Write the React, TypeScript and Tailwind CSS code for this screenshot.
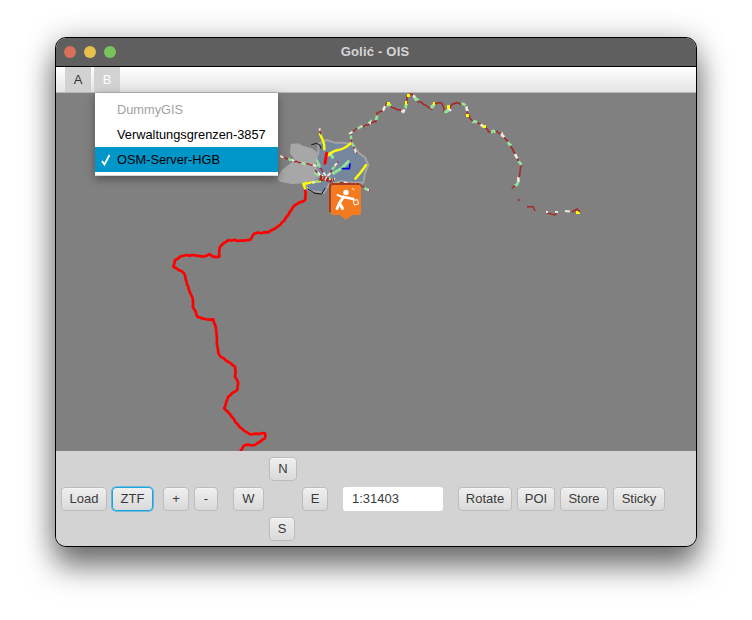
import React from "react";

const font = { fontFamily: '"Liberation Sans", Arial, sans-serif' };

type P = [number, number];

// Roughens a traced polyline so a route looks like recorded GPS data.
function rough(points: P[], step: number, amp: number, seed: number): string {
  let out = `M${points[0][0]} ${points[0][1]}`;
  let k = seed;
  for (let i = 1; i < points.length; i++) {
    const [x0, y0] = points[i - 1];
    const [x1, y1] = points[i];
    const len = Math.hypot(x1 - x0, y1 - y0);
    const n = Math.max(1, Math.round(len / step));
    for (let j = 1; j <= n; j++) {
      k += 1;
      const t = j / n;
      const a = j === n ? 0 : Math.sin(k * 12.9898) * amp;
      const b = j === n ? 0 : Math.sin(k * 78.233) * amp;
      out += ` L${(x0 + (x1 - x0) * t + a).toFixed(1)} ${(y0 + (y1 - y0) * t + b).toFixed(1)}`;
    }
  }
  return out;
}

function Btn({ label, w, focus }: { label: string; w: string; focus?: boolean }) {
  return (
    <div
      className={`${w} h-[24px] flex items-center justify-center rounded-[4px] border bg-gradient-to-b from-[#efefef] to-[#dadada] text-[13px] text-[#3a3a3a] ${
        focus ? "border-[#1aa5e0] shadow-[0_0_0_0.6px_#1aa5e0]" : "border-[#bcbcbc] shadow-[inset_0_1px_0_#f6f6f6]"
      }`}
    >
      {label}
    </div>
  );
}

const redPts: P[] = [
  [305, 190], [305, 200], [295, 205], [288.3, 215], [280, 225], [268.3, 232.3], [255, 233.3], [250, 240],
  [240, 240.7], [228.3, 240], [220, 246.7], [219.3, 256.7], [213.3, 256.7], [209.3, 254], [203.3, 256.7],
  [193.3, 255], [183.3, 255.7], [175, 260], [173.3, 266.7], [184, 273.3], [188.3, 286.7], [192.7, 298.3],
  [192.7, 306.7], [197.3, 316.7], [206.7, 319.3], [213.3, 319.3], [215.7, 326.7], [216.7, 343.3], [219.3, 355],
  [235, 366.7], [235, 376.7], [238.3, 383.3], [237.3, 390], [228.3, 396.7], [224, 408.3], [231.7, 416.7],
  [240, 427.3], [250, 434.3], [265, 433.3], [265, 438.3], [255, 445], [245, 445], [240, 451],
];

const trackPts: P[] = [
  [370, 123], [376, 121.7], [376.7, 113.3], [383.3, 110], [386.7, 103.3], [395, 108.3], [403.3, 111.7],
  [406.7, 101.7], [408.3, 95], [411.7, 94], [418.3, 101.7], [425, 105], [431.7, 109.3], [435, 102.7],
  [441.7, 103.3], [444, 111.7], [450, 110], [451.7, 105], [456.7, 102.7], [465, 105], [467.3, 113.3],
  [471.7, 120], [478.3, 123.3], [485, 126.7], [488.3, 131.7], [495, 131.7], [501.7, 133.3], [506.7, 140],
  [513.3, 151.7], [521.7, 165], [518.3, 178.3], [516.7, 185], [511.7, 187.7],
];

// traced in the 3x crop's coordinates (origin 270,120)
const branches: P[][] = [
  [[30, 108], [60, 120], [100, 130], [130, 135], [150, 138]],
  [[148, 25], [155, 45]],
  [[245, 68], [240, 40], [260, 25], [295, 15], [305, 0]],
  [[245, 68], [262, 100]],
  [[205, 186], [240, 190], [270, 195], [300, 212]],
  [[135, 150], [150, 165], [170, 180]],
  [[205, 125], [185, 150], [165, 178]],
  [[125, 190], [150, 180], [195, 176]],
  [[145, 130], [158, 155], [175, 185]],
];

function Map() {
  const red = rough(redPts, 3, 0.55, 3);
  const track = rough(trackPts, 2.2, 0.8, 11);
  return (
    <svg viewBox="56 93 640 358" className="absolute inset-0 w-full h-full">
      <g transform="translate(270 120) scale(0.3333)">
        <path
          d="M62 72 L85 70 L100 78 L125 85 L140 95 L150 105 L135 120 L145 140 L150 165 L130 180 L100 190 L65 192 L30 185 L22 175 L35 150 L55 135 L75 120 L60 100 Z"
          fill="#a7a7a7"
        />
        <path
          d="M145 72 L170 60 L195 68 L215 68 L248 72 L265 98 L285 112 L295 135 L285 160 L280 188 L245 188 L215 184 L178 192 L162 218 L120 212 L105 195 L130 180 L145 170 L135 130 L145 100 Z"
          fill="#76879d"
          stroke="#a3a3a3"
          strokeWidth="6"
          strokeLinejoin="round"
        />

        <g fill="none" strokeLinecap="round" strokeLinejoin="round">
          <path d="M188 112 L180 100" stroke="#8fe39a" strokeWidth="9" />
          <path d="M190 160 L215 145 L235 125" stroke="#8fe39a" strokeWidth="9" />
          <path d="M145 165 L135 160 M140 120 L145 130" stroke="#8fe39a" strokeWidth="7" />
          <path d="M150 42 Q156 55 160 65 T163 88" stroke="#ffff00" strokeWidth="7" />
          <path d="M172 108 Q188 92 205 90 T245 68" stroke="#ffff00" strokeWidth="7" />
          <path d="M288 135 Q278 150 270 160 T256 176" stroke="#ffff00" strokeWidth="7" />
          <path d="M105 205 L100 192 L125 187 L150 183" stroke="#ffff00" strokeWidth="7" />
          <path d="M170 100 L165 130" stroke="#ff0000" strokeWidth="9" />
          <path d="M240 130 L238 146 L215 146" stroke="#0000e0" strokeWidth="5" strokeLinecap="butt" />
          <path d="M115 208 L135 220 L155 222 L165 205 M125 74 L140 70 L150 76 L153 85" stroke="#111" strokeWidth="3" />
        </g>

        {branches.map((b, i) => {
          const d = rough(b, 7, 2, i * 7);
          return (
            <g key={i} fill="none" strokeWidth="4">
              <path d={d} stroke="#a52a2a" />
              <path d={d} stroke="#ecece4" strokeWidth="6" strokeDasharray="12 24" strokeDashoffset={i * 5} />
              <path d={d} stroke="#8fe39a" strokeWidth="7" strokeDasharray="12 34" strokeDashoffset={i * 9 + 18} />
            </g>
          );
        })}
        <path d="M150 172 L190 184" fill="none" stroke="#b01c1c" strokeWidth="13" strokeDasharray="7 3" />
        <path d="M155 165 L185 180 M175 165 L160 185" fill="none" stroke="#f0f0f0" strokeWidth="4" strokeDasharray="5 8" />
      </g>

      <path d={red} fill="none" stroke="#ff0000" strokeWidth="2.7" strokeLinejoin="round" />

      <g fill="none">
        <path d={track} stroke="#a52a2a" strokeWidth="1.6" />
        <path d={track} stroke="#ecece4" strokeWidth="2.6" strokeDasharray="5 21" strokeDashoffset="4" />
        <path d={track} stroke="#8fe39a" strokeWidth="2.8" strokeDasharray="5 18" strokeDashoffset="15" />
      </g>
      <g fill="#ffff00">
        <rect x="407" y="94" width="3" height="3" />
        <rect x="387" y="102" width="3" height="3" />
        <rect x="405" y="101" width="2" height="4" />
        <rect x="433" y="102" width="2" height="3" />
        <rect x="447" y="105" width="3" height="4" />
        <rect x="466" y="114" width="3" height="3" />
        <rect x="483" y="125" width="3" height="3" />
        <rect x="576" y="211" width="4" height="3" />
      </g>
      <g fill="none" stroke="#a52a2a" strokeWidth="1.5">
        <path d="M518.5 199 L519 201" />
        <path d="M527 207 L533 206.5 L535 211" />
        <path d="M547 213 L555 215 L557 212" />
        <path d="M572 212 L577 209 L580 212" />
      </g>
      <g fill="none" stroke="#e8e8e0" strokeWidth="1.8">
        <path d="M546 212 L548 212" />
        <path d="M555 212 L558 212" />
        <path d="M565 211 L570 211.5" />
      </g>

      <path d="M332 183 L358 183 Q361 183 361 186 L361 212 L329 212 L329 186 Q329 183 332 183 Z" fill="#a83c20" />
      <path
        d="M333 185 L359 185 Q361 185 361 187 L361 213 Q361 215 359 215 L352 215 L346 220 L340 215 L333 215 Q331 215 331 213 L331 187 Q331 185 333 185 Z"
        fill="#f47a1f"
      />
      <g stroke="#fff" fill="none" strokeLinecap="round" strokeLinejoin="round">
        <circle cx="346" cy="192.5" r="2.7" fill="#fff" stroke="none" />
        <path d="M343.5 197 L339.5 203 L337 208.5 M339.5 203 L342.5 208.5" strokeWidth="2.9" />
        <path d="M343.5 197 L353.5 199" strokeWidth="2.3" />
        <path d="M342.5 197 L337.5 195" strokeWidth="2" />
        <rect x="354" y="200" width="4" height="4.5" strokeWidth="0.9" transform="rotate(-15 356 202)" />
        <path d="M352.5 188.5 L354 190" strokeWidth="1" />
      </g>
    </svg>
  );
}

export default function App() {
  return (
    <div className="w-[752px] h-[620px] bg-white pl-[55px] pt-[37px] overflow-hidden" style={font}>
      <div className="relative w-[642px] h-[510px] flex flex-col overflow-hidden rounded-[11px] border border-black shadow-[0_20px_30px_rgba(0,0,0,0.5),0_2px_30px_rgba(0,0,0,0.25)] bg-[#d3d3d3]">
        <div className="relative h-[29px] shrink-0 flex items-center justify-center bg-[#5f5f5f] border-b border-black">
          <div className="absolute left-[8px] top-[8px] flex gap-[8px]">
            <span className="w-[12px] h-[12px] rounded-full bg-[#d9705c]" />
            <span className="w-[12px] h-[12px] rounded-full bg-[#e8c04f]" />
            <span className="w-[12px] h-[12px] rounded-full bg-[#78c45a]" />
          </div>
          <span className="-ml-[2px] text-[13px] font-bold tracking-[0.2px] text-[#d6d6d6]">Golić - OIS</span>
        </div>

        <div className="h-[26px] shrink-0 flex pl-[9px] gap-[3px] bg-gradient-to-b from-white to-[#e4e4e4] border-b border-[#b8b8b8]">
          <div className="w-[26px] h-[25px] flex items-center justify-center bg-[#d2d2d2] text-[13px] text-[#333]">A</div>
          <div className="w-[26px] h-[25px] flex items-center justify-center bg-[#d2d2d2] text-[13px] text-white">B</div>
        </div>

        <div className="relative h-[358px] shrink-0 bg-[#808080]">
          <Map />
          <div className="absolute left-[39px] top-0 w-[183px] h-[83px] pt-[4px] bg-white border-b-[1px] border-[#d8d8d8] shadow-[0_3px_9px_rgba(0,0,0,0.38)] text-[12.8px]">
            <div className="h-[25px] flex items-center pl-[22px] text-[#a2a2a2]">DummyGIS</div>
            <div className="h-[25px] flex items-center pl-[22px] text-black">Verwaltungsgrenzen-3857</div>
            <div className="relative h-[25px] flex items-center pl-[22px] bg-[#0096c9] text-black">
              <svg viewBox="0 0 10 12" className="absolute left-[6px] top-[7px] w-[10px] h-[12px]">
                <path d="M1 7 L3.5 10.5 L8.5 1" fill="none" stroke="#fff" strokeWidth="1.8" />
              </svg>
              OSM-Server-HGB
            </div>
          </div>
        </div>

        <div className="flex-1 flex items-center pl-[5px] pt-[1px] bg-[#d3d3d3]">
          <Btn label="Load" w="w-[46px]" />
          <div className="ml-[5px]"><Btn label="ZTF" w="w-[41px]" focus /></div>
          <div className="ml-[10px]"><Btn label="+" w="w-[26px]" /></div>
          <div className="ml-[5px]"><Btn label="-" w="w-[24px]" /></div>
          <div className="ml-[15px] grid grid-cols-[31px_28px_26px] grid-rows-[24px_24px_24px] gap-x-[5px] gap-y-[6px]">
            <div className="col-start-2 row-start-1"><Btn label="N" w="w-[28px]" /></div>
            <div className="col-start-1 row-start-2"><Btn label="W" w="w-[31px]" /></div>
            <div className="col-start-3 row-start-2"><Btn label="E" w="w-[26px]" /></div>
            <div className="col-start-2 row-start-3"><Btn label="S" w="w-[26px]" /></div>
          </div>
          <div className="ml-[15px] w-[100px] h-[24px] flex items-center pl-[9px] rounded-[3px] bg-white text-[13px] text-[#3a3a3a]">1:31403</div>
          <div className="ml-[15px]"><Btn label="Rotate" w="w-[54px]" /></div>
          <div className="ml-[5px]"><Btn label="POI" w="w-[38px]" /></div>
          <div className="ml-[5px]"><Btn label="Store" w="w-[48px]" /></div>
          <div className="ml-[5px]"><Btn label="Sticky" w="w-[52px]" /></div>
        </div>
      </div>
    </div>
  );
}
